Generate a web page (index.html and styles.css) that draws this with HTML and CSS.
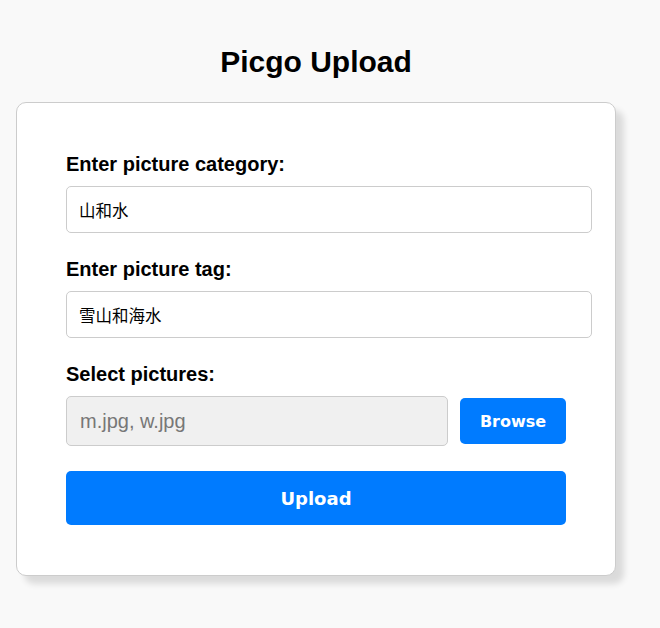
FILE: index.html
```html
<!DOCTYPE html>
<html lang="en">
<head>
<meta charset="utf-8">
<title>Picgo Upload</title>
<link rel="stylesheet" href="styles.css">
</head>
<body>
<div class="page">
  <h1 class="title">Picgo Upload</h1>
  <form class="card">
    <label class="label" for="category">Enter picture category:</label>
    <input class="text-input" id="category" type="text" value="山和水">
    <label class="label" for="tag">Enter picture tag:</label>
    <input class="text-input" id="tag" type="text" value="雪山和海水">
    <label class="label" for="files">Select pictures:</label>
    <div class="file-row">
      <input class="file-input" id="files" type="text" placeholder="m.jpg, w.jpg" readonly>
      <button class="browse-btn" type="button">Browse</button>
    </div>
    <button class="upload-btn" type="button">Upload</button>
  </form>
</div>
</body>
</html>
```
FILE: styles.css
```css
html, body {
  margin: 0;
  padding: 0;
  background: #f9f9f9;
}
body {
  font-family: "Liberation Sans", Arial, "Noto Sans CJK SC", sans-serif;
  color: #000;
}
.page {
  width: 600px;
  margin-left: 16px;
  padding-top: 45px;
  padding-bottom: 40px;
}
.title {
  margin: 0 0 23px;
  text-align: center;
  font-size: 30px;
  font-weight: bold;
}
.card {
  background: #fff;
  border: 1px solid #ccc;
  border-radius: 10px;
  box-shadow: 8px 8px 6px rgba(0, 0, 0, 0.12);
  padding: 50px 49px;
  display: flex;
  flex-direction: column;
}
.label {
  display: block;
  font-size: 20px;
  font-weight: bold;
  line-height: 23px;
  margin-bottom: 10px;
}
.text-input {
  display: block;
  width: 500px;
  height: 21px;
  padding: 12px;
  border: 1px solid #ccc;
  border-radius: 5px;
  font-family: "Liberation Sans", Arial, "Noto Sans CJK SC", sans-serif;
  font-size: 16.5px;
  color: #000;
  background: #fff;
  margin: 0 0 25px;
  outline: none;
}
.file-row {
  display: flex;
  align-items: center;
  gap: 12px;
  margin-bottom: 25px;
}
.file-input {
  width: 382px;
  height: 50px;
  box-sizing: border-box;
  padding: 0 13px;
  border: 1px solid #ccc;
  border-radius: 5px;
  background: #f0f0f0;
  font-family: "Liberation Sans", Arial, sans-serif;
  font-size: 20px;
  color: #777;
  outline: none;
}
.file-input::placeholder {
  color: #777;
}
.browse-btn {
  width: 106px;
  height: 46px;
  border: none;
  border-radius: 5px;
  background: #007bff;
  color: #fff;
  font-family: "DejaVu Sans", sans-serif;
  font-weight: bold;
  font-size: 16px;
  padding: 0;
}
.upload-btn {
  width: 500px;
  height: 54px;
  border: none;
  border-radius: 5px;
  background: #007bff;
  color: #fff;
  font-family: "DejaVu Sans", sans-serif;
  font-weight: bold;
  font-size: 18px;
  padding: 0;
}
```
